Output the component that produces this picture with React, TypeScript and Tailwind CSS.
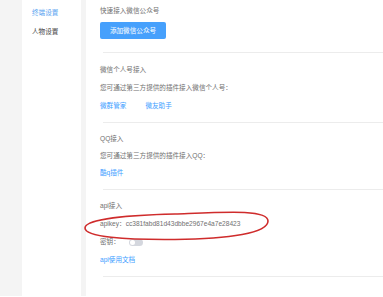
const font = {
  fontFamily: '"Liberation Sans", "Noto Sans CJK SC", sans-serif',
};

function Divider() {
  return <div className="ml-[3px] h-px bg-[#ececec]" />;
}

function Row({ h, children }: { h: string; children: React.ReactNode }) {
  return <div className={`${h} flex items-center`}>{children}</div>;
}

export default function App() {
  return (
    <div
      className="relative flex h-[296px] w-[383px] overflow-hidden bg-[#f4f4f4] text-[6.6px] text-[#707070]"
      style={font}
    >
      {/* sidebar */}
      <div className="ml-[22px] w-[59px] bg-white pt-[3px] pl-[10px]">
        <div className="flex h-[19px] items-center text-[#58a3f0]">终端设置</div>
        <div className="flex h-[19px] items-center text-[#444]">人物设置</div>
      </div>

      {/* main */}
      <div className="ml-[5px] flex-1 bg-white pl-[14px]">
        <section className="pb-[13px]">
          <Row h="h-[22px]">快速接入微信公众号</Row>
          <button className="flex h-[17px] w-[66px] items-center justify-center rounded-[2px] bg-[#46a0fc] text-white">
            添加微信公众号
          </button>
        </section>
        <Divider />

        <section className="pt-[8px] pb-[7px]">
          <Row h="h-[18px]">微信个人号接入</Row>
          <Row h="h-[18px]">您可通过第三方提供的插件接入微信个人号：</Row>
          <Row h="h-[18px]">
            <span className="text-[#409eff]">微群管家</span>
            <span className="ml-[19px] text-[#409eff]">微友助手</span>
          </Row>
        </section>
        <Divider />

        <section className="pt-[7px] pb-[8px]">
          <Row h="h-[17px]">QQ接入</Row>
          <Row h="h-[17px]">您可通过第三方提供的插件接入QQ：</Row>
          <Row h="h-[17px]">
            <span className="text-[#409eff]">酷q插件</span>
          </Row>
        </section>
        <Divider />

        <section className="pt-[7px] pb-[7px]">
          <Row h="h-[18px]">api接入</Row>
          <Row h="h-[18px]">apikey：cc381fabd81d43dbbe2967e4a7e28423</Row>
          <Row h="h-[18px]">
            <span>密钥：</span>
            <div className="relative ml-[9px] h-[7px] w-[14px] shrink-0 rounded-full bg-[#d4d7de]">
              <div className="absolute top-[1px] left-[1px] h-[5px] w-[5px] rounded-full bg-white" />
            </div>
          </Row>
          <Row h="h-[18px]">
            <span className="text-[#409eff]">api使用文档</span>
          </Row>
        </section>
        <Divider />
      </div>

      {/* hand-drawn highlight */}
      <svg
        className="pointer-events-none absolute top-0 left-0"
        width="383"
        height="297"
        viewBox="0 0 383 297"
      >
        <path
          d="M 85 228 C 85 219, 130 215, 175 214 C 225 212, 268 209, 268 221 C 268 233, 230 239, 175 239.5 C 125 240, 85 237, 85 228 Z"
          fill="none"
          stroke="#cf2c2c"
          strokeWidth="1.6"
        />
      </svg>
    </div>
  );
}
